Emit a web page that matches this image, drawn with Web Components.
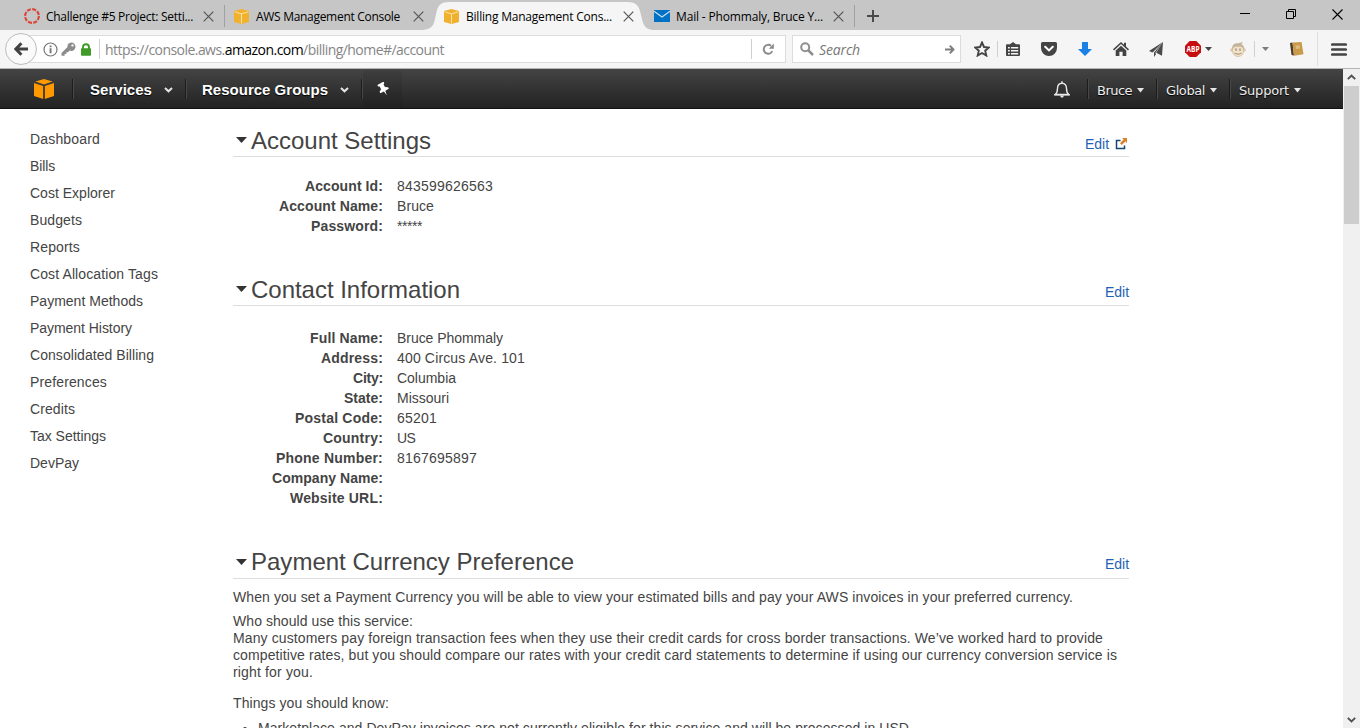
<!DOCTYPE html>
<html lang="en">
<head>
<meta charset="utf-8">
<title>Billing Management Console</title>
<style>
html,body{margin:0;height:100%;overflow:hidden;background:#fff}
body{font-family:"Liberation Sans",Arial,sans-serif;font-size:14px;color:#444}
</style>
</head>
<body>
<browser-window></browser-window>
<script>
const define = (name, html, init) => {
  const t = document.createElement('template');
  t.innerHTML = html;
  customElements.define(name, class extends HTMLElement {
    connectedCallback() {
      if (this.shadowRoot) return;
      this.attachShadow({mode: 'open'}).appendChild(t.content.cloneNode(true));
      if (init) init(this, this.shadowRoot);
    }
  });
};

/* Single-line text tracked to a given width. */
define('fit-text', `<style>:host{display:inline-block;white-space:nowrap;flex:none}</style><span><slot></slot></span>`, (el, root) => {
  const span = root.querySelector('span');
  const w = +el.getAttribute('w');
  if (!w) return;
  const n = el.textContent.length;
  span.style.letterSpacing = ((w - span.getBoundingClientRect().width) / n) + 'px';
  el.style.width = w + 'px';
});

const cube = (c, d) => `<path fill="${c}" d="M10 0 18.6 2.6 10 5.4 1.4 2.6zM0 3.9 9.3 6.9V20L0 17zM20 3.9 10.7 6.9V20L20 17z"/><path fill="${d}" d="M9.3 6.9h1.4V20H9.3z"/>`;
const icons = {
  canvas: [16,16,'<circle cx="8" cy="8" r="6.9" fill="none" stroke="#dd4238" stroke-width="2.1" stroke-dasharray="4.1 1.32"/>'],
  cubeTab: [15,15,'<svg viewBox="0 0 20 20" width="15" height="15"><path fill="#f0b22e" d="M10 0 20 2.6V17.4L10 20 0 17.4V2.6z"/><path d="M1 3.8 10 6.4 19 3.8M10 6.4V19" stroke="#fae3a8" stroke-width="1.3" fill="none"/></svg>'],
  cube: [20,20,cube('#f90','#4a3a20')],
  mail: [16,12,'<path fill="#0072c6" d="M0 0h16v12H0z"/><path d="M0 1.2 8 7l8-5.8" stroke="#c9dcec" stroke-width="1.4" fill="none"/>'],
  x: [11,11,'<path d="M.7.7l9.6 9.6M10.3.7.7 10.3" stroke="#555" stroke-width="1.2"/>'],
  plus: [12,12,'<path d="M6 0v12M0 6h12" stroke="#4a4a4a" stroke-width="2"/>'],
  min: [10,10,'<path d="M0 4.5h10" stroke="#000"/>'],
  restore: [10,10,'<path d="M.5 2.5h7v7h-7zM2.5 2.5v-2h7v7h-2" stroke="#000" fill="none"/>'],
  winx: [11,11,'<path d="M.5.5l10 10M10.500.5l-10 10" stroke="#000" stroke-width="1.1"/>'],
  back: [14,14,'<path d="M7.400 1.200 1.800 7l5.600 5.800M2.400 7H14" stroke="#424242" stroke-width="3" fill="none"/>'],
  info: [15,15,'<circle cx="7.500" cy="7.500" r="6.500" fill="none" stroke="#777" stroke-width="1.200"/><path d="M6.600 6.300h1.900v5H6.600zM6.600 3.500h1.900v1.700H6.600z" fill="#777"/>'],
  key: [15,15,'<path fill="#8c8c8c" fill-rule="evenodd" d="M10.200.5a4.200 4.200 0 1 1-1.500 8.100L7 10.300H5.400v1.700H3.600v1.700H.5v-2.600l6-6A4.200 4.200 0 0 1 10.200.5zM11.500 2.200a1.200 1.200 0 1 0 .01 0z"/>'],
  lock: [10,13,'<path d="M2 6V4.200a3 3 0 0 1 6 0V6" stroke="#3f9a28" stroke-width="1.900" fill="none"/><rect y="5.300" width="10" height="7.400" rx=".8" fill="#3f9a28"/>'],
  reload: [13,13,'<path d="M10.300 8.200A4.500 4.500 0 1 1 9 2.700" stroke="#8a8a8a" stroke-width="1.900" fill="none"/><path d="M6.800 5.800h5V.6z" fill="#8a8a8a"/>'],
  search: [14,14,'<circle cx="5.200" cy="5.200" r="4" stroke="#8f8f8f" stroke-width="2" fill="none"/><path d="M8 8l5 5" stroke="#8f8f8f" stroke-width="2.500"/>'],
  go: [10,9,'<path d="M0 4.500h8M4.800.7l3.700 3.800-3.700 3.800" stroke="#7d7d7d" stroke-width="1.900" fill="none"/>'],
  star: [16,16,'<path d="M8 1.500l2 4.500 4.900.5-3.700 3.200 1.100 4.800L8 12l-4.300 2.500 1.100-4.800L1.100 6.500 6 6z" fill="none" stroke="#444" stroke-width="1.900"/>'],
  list: [14,15,'<path fill="#444" fill-rule="evenodd" d="M4 2.200 7 0l3 2.200h3a1 1 0 0 1 1 1V13a1 1 0 0 1-1 1H1a1 1 0 0 1-1-1V3.200a1 1 0 0 1 1-1zM2 5v1.500h1.800V5zm3 0v1.500h7.200V5zM2 8v1.500h1.800V8zm3 0v1.500h7.200V8zM2 11v1.500h1.800V11zm3 0v1.500h7.200V11z"/>'],
  pocket: [16,14,'<path fill="#444" d="M1.500 0h13A1.500 1.500 0 0 1 16 1.500V6A8 8 0 0 1 0 6V1.500A1.500 1.500 0 0 1 1.500 0z"/><path d="M4.200 4.800 8 8.400l3.800-3.600" stroke="#fff" stroke-width="2.100" stroke-linecap="round" fill="none"/>'],
  down: [14,14,'<path fill="#1a80e6" d="M4 0h6v7h4l-7 7-7-7h4z"/>'],
  home: [16,14,'<path fill="#444" d="M8 0l3 2.700V.8h2v3.800L16 7.300l-1 1.100-7-6.300-7 6.300L0 7.300z"/><path fill="#444" d="M8 3.700l5.300 4.800V14H9.600V9.800H6.400V14H2.700V8.500z"/>'],
  plane: [14,15,'<path fill="#4a4a4a" d="M14 0 0 9l3.500 1.400zM14 0 5 10.500V15l2-2.700-.6-1.300zM14 0 7.200 10.800l5.800 3z"/>'],
  abp: [16,16,'<path fill="#c70d0d" d="M4.700 0h6.600L16 4.700v6.600L11.300 16H4.700L0 11.300V4.700z"/><text x="8" y="10.900" text-anchor="middle" textLength="13" lengthAdjust="spacingAndGlyphs" font-family="Open Sans,sans-serif" font-weight="700" font-size="8" fill="#fff">ABP</text>'],
  caret: [7,4,'<path fill="#444" d="M0 0h7L3.500 4z"/>'],
  caretg: [7,4,'<path fill="#7c7c7c" d="M0 0h7L3.500 4z"/>'],
  monkey: [16,15,'<circle cx="1.800" cy="8" r="1.700" fill="#dccab2"/><circle cx="14.200" cy="8" r="1.700" fill="#dccab2"/><path fill="#c4b49c" d="M2 7C2 2 5 1 8 1.300l5-1.300-1.500 2.300C14 3.500 14.500 6 14 8z"/><path fill="#f3e3cb" stroke="#d3bd9d" stroke-width=".8" d="M2.500 9c0-4 2.500-5 5.500-4.500C11.500 4 13.500 5 13.500 9c0 7.300-11 7.300-11 0z"/><path stroke="#8f8270" stroke-width="1.300" d="M6 6.500v2.300M10 6.500v2.300" fill="none"/><path stroke="#a08e78" d="M4.500 11c2.300 1.500 4.700 1.500 7 0" fill="none"/>'],
  book: [14,14,'<path fill="#4d3c2a" d="M0 1 2.500.5 4 13.500 1.500 13z"/><path fill="#c99a4a" d="M2.500.5 11.500 0 13.500 12.200 4 13.800z"/><path fill="#e5c68c" d="M5.500 3.500 9.500 3.200 10 6.500 6 7z" opacity=".8"/>'],
  burger: [16,13,'<path d="M1.300 1.500h13.400M1.300 6.500h13.400M1.300 11.500h13.400" stroke="#444" stroke-width="2.700" stroke-linecap="round"/>'],
  chev: [9,6,'<path d="M1 1l3.500 3.300L8 1" stroke="#e6e6e6" stroke-width="2" fill="none"/>'],
  caretw: [7,5,'<path fill="#e6e6e6" d="M0 0h7L3.500 4.500z"/>'],
  pin: [13,14,'<g transform="rotate(-28 6.500 7)"><path fill="#fff" d="M3 .5h7v1.700L8.700 3v3l2.600 1.700v1.600H7.300L6.500 14l-.8-4.700h-4V7.700L4.300 6V3L3 2.200z"/></g>'],
  bell: [16,17,'<path d="M1.200 13.500C3.200 12 3.500 10 3.500 7.500 3.500 4 5.500 2.200 8 2.200s4.500 1.800 4.500 5.300c0 2.500.3 4.500 2.300 6z" stroke="#e8e8e8" stroke-width="1.400" fill="none"/><path d="M.3 13.700h15.400M8 .2v2" stroke="#e8e8e8" stroke-width="1.500"/><path d="M6 14.500h4l-1 2H7z" fill="#e8e8e8"/>'],
  ext: [12,12,'<path d="M5.500 2.500H1.500v8h8V7.500" stroke="#15466f" stroke-width="1.500" fill="none"/><path d="M7 0h5v5l-1.600-1.600L6.700 7 5 5.300l3.600-3.700z" fill="#d9822b"/>'],
  tri: [11,6,'<path d="M0 0h11L5.500 6z" fill="#333"/>'],
  up: [9,6,'<path d="M.8 5.200 4.500 1.500l3.700 3.700" stroke="#505050" stroke-width="1.900" fill="none"/>'],
  dn: [9,6,'<path d="M.8.8l3.700 3.700L8.200.8" stroke="#505050" stroke-width="1.900" fill="none"/>']
};
define('ui-icon', `<style>:host{display:block;flex:none;line-height:0}svg{display:block}</style>`, (el, root) => {
  const [w, h, body] = icons[el.getAttribute('name')];
  const box = document.createElement('div');
  box.innerHTML = `<svg xmlns="http://www.w3.org/2000/svg" width="${w}" height="${h}" viewBox="0 0 ${w} ${h}">${body}</svg>`;
  root.appendChild(box);
});

define('browser-tab', `<style>
:host{display:flex;align-items:center;width:210px;height:30px;box-sizing:border-box;padding:2px 10px 0;position:relative;flex:none;font:12px "Open Sans","Noto Sans",sans-serif;color:#000}
.i{width:22px}.x{margin-left:auto}
::slotted(*),.i,.x{position:relative}
.bg{display:none;position:absolute;left:-12px;top:2px}
:host([active]) .bg{display:block}
.d{display:none;position:absolute;right:-1px;top:5px;width:1px;height:22px;background:#a0a0a0}
:host([divided]) .d{display:block}
</style><svg class="bg" width="232" height="28"><path fill="#f5f5f5" d="M0 28C12 27 12 22 14 12 16 3 18 0 28 0H205C215 0 217 4 219 13 221 22 222 27 231 28z"/></svg>
<div class="i"><slot name="icon"></slot></div><slot></slot><ui-icon class="x" name="x"></ui-icon><div class="d"></div>`);

define('tab-strip', `<style>
:host{display:flex;height:30px;background:#c6c6c6;padding-left:14px;box-sizing:border-box}
.plus{margin:10px 0 0 13px}
.win{margin-left:auto;display:flex;gap:36px;padding:9px 17px 0 0}
</style>
<browser-tab divided><ui-icon slot="icon" name="canvas"></ui-icon><fit-text w="147">Challenge #5 Project: Setti...</fit-text></browser-tab>
<browser-tab><ui-icon slot="icon" name="cubeTab"></ui-icon><fit-text w="144">AWS Management Console</fit-text></browser-tab>
<browser-tab active><ui-icon slot="icon" name="cubeTab"></ui-icon><fit-text w="146">Billing Management Cons...</fit-text></browser-tab>
<browser-tab divided><ui-icon slot="icon" name="mail"></ui-icon><fit-text w="147">Mail - Phommaly, Bruce Y...</fit-text></browser-tab>
<ui-icon class="plus" name="plus"></ui-icon>
<div class="win"><ui-icon name="min"></ui-icon><ui-icon name="restore"></ui-icon><ui-icon name="winx"></ui-icon></div>`);

define('tool-bar', `<style>
:host{display:flex;align-items:center;height:39px;background:#f5f5f5;border-bottom:1px solid #b4b4b4;box-sizing:border-box;font:14px "Open Sans","Noto Sans",sans-serif;color:#858585}
.back{width:32px;height:32px;box-sizing:border-box;border:1px solid #bdbdbd;border-radius:50%;background:#fafafa;margin-left:5px;display:flex;align-items:center;justify-content:center;flex:none;z-index:1}
.field{display:flex;align-items:center;height:28px;box-sizing:border-box;border:1px solid #dcdcdc;background:#fff;flex:none}
.url{width:762px;margin-left:-13px;padding-left:18px}
.find{width:169px;margin-left:6px;padding-left:7px;font-style:italic;color:#777}
.s{width:1px;height:20px;background:#cfcfcf;flex:none}
b{font-weight:400;color:#000}
</style>
<div class="back"><ui-icon name="back"></ui-icon></div>
<div class="field url"><ui-icon name="info"></ui-icon><ui-icon name="key" style="margin-left:3px"></ui-icon><ui-icon name="lock" style="margin-left:5px"></ui-icon><div class="s" style="margin:0 5px 0 8px"></div><fit-text w="339">https://console.aws.<b>amazon.com</b>/billing/home#/account</fit-text><div class="s" style="margin-left:307px"></div><ui-icon name="reload" style="margin-left:10px"></ui-icon></div>
<div class="field find"><ui-icon name="search"></ui-icon><fit-text w="41" style="margin-left:5px">Search</fit-text><ui-icon name="go" style="margin-left:85px"></ui-icon></div>
<ui-icon name="star" style="margin-left:13px"></ui-icon><div class="s" style="margin-left:7px;height:16px"></div>
<ui-icon name="list" style="margin-left:8px"></ui-icon><ui-icon name="pocket" style="margin-left:21px"></ui-icon>
<ui-icon name="down" style="margin-left:21px"></ui-icon><ui-icon name="home" style="margin-left:21px"></ui-icon>
<ui-icon name="plane" style="margin-left:20px"></ui-icon><ui-icon name="abp" style="margin-left:22px"></ui-icon>
<ui-icon name="caret" style="margin-left:4px"></ui-icon><ui-icon name="monkey" style="margin-left:18px"></ui-icon>
<div class="s" style="margin-left:8px;height:16px"></div><ui-icon name="caretg" style="margin-left:7px"></ui-icon>
<ui-icon name="book" style="margin-left:21px"></ui-icon><div class="s" style="margin-left:13px;height:34px;background:#dedede"></div><ui-icon name="burger" style="margin-left:13px"></ui-icon>`);

define('console-nav', `<style>
:host{display:flex;align-items:center;height:40px;background:linear-gradient(#444,#222);border-bottom:1px solid #111;box-sizing:border-box;padding:1px 42px 0 34px;color:#fff;text-shadow:0 1px 1px #000}
.s{width:1px;height:20px;background:#1c1c1c;border-right:1px solid #484848;flex:none}
.m{font-weight:700;font-size:15px}
.r{font:13px "DejaVu Sans",Verdana,sans-serif;color:#eee;padding-top:2px}
.p{display:flex;align-items:center;width:39px;height:36px;padding-left:14px;box-sizing:border-box;background:#0001}
</style>
<ui-icon name="cube"></ui-icon><div class="s" style="margin:0 16px 0 18px"></div>
<fit-text class="m" w="62">Services</fit-text><ui-icon name="chev" style="margin:1px 0 0 12px"></ui-icon><div class="s" style="margin:0 15px 0 12px"></div>
<fit-text class="m" w="126">Resource Groups</fit-text><ui-icon name="chev" style="margin:1px 0 0 12px"></ui-icon><div class="s" style="margin-left:12px"></div>
<div class="p"><ui-icon name="pin"></ui-icon></div>
<ui-icon name="bell" style="margin-left:auto"></ui-icon><div class="s" style="margin:0 8px 0 17px"></div>
<fit-text class="r" w="35">Bruce</fit-text><ui-icon name="caretw" style="margin:2px 0 0 5px"></ui-icon><div class="s" style="margin:0 8px 0 12px"></div>
<fit-text class="r" w="39">Global</fit-text><ui-icon name="caretw" style="margin:2px 0 0 5px"></ui-icon><div class="s" style="margin:0 8px 0 12px"></div>
<fit-text class="r" w="50">Support</fit-text><ui-icon name="caretw" style="margin:2px 0 0 5px"></ui-icon>`);

define('side-nav', `<style>
:host{display:block;width:233px;box-sizing:border-box;padding:17px 0 0 30px;flex:none;line-height:27px}
::slotted(*){display:block!important}
</style><slot></slot>`);

define('panel-heading', `<style>
:host{display:flex;align-items:center;height:32px;box-sizing:border-box;border-bottom:1px solid #ddd;padding-left:3px;font-size:24px}
:host([raised]) .t{padding-bottom:2px}
.t{margin-left:4px;flex:1}
.e{display:flex;align-items:center;gap:6px;font-size:14px;color:#1f62b4;padding-top:6px}
ui-icon[name=tri]{margin-bottom:1px}
:host([raised]) .e{padding-top:3px}
:host([low]) .e{padding-top:4px}
</style><ui-icon name="tri"></ui-icon><div class="t"><slot></slot></div><div class="e"><fit-text w="24">Edit</fit-text><slot name="after"></slot></div>`);

define('detail-row', `<style>
:host{display:grid;grid-template-columns:150px 1fr;column-gap:14px;height:20px;line-height:20px}
.l{text-align:right;font-weight:700}
</style><div class="l"><slot name="label"></slot></div><div><slot></slot></div>`);

define('scroll-bar', `<style>
:host{display:flex;flex-direction:column;align-items:center;width:17px;background:#f0f0f0;flex:none}
.th{width:15px;height:138px;background:#cdcdcd;margin-top:6px}
ui-icon[name=up]{margin-top:5px}ui-icon[name=dn]{margin:auto 0 5px}
</style><ui-icon name="up"></ui-icon><div class="th"></div><ui-icon name="dn"></ui-icon>`);

const row = (l, lw, v, vw) => `<detail-row><fit-text slot="label" w="${lw}">${l}</fit-text>${v ? `<fit-text w="${vw}">${v}</fit-text>` : ''}</detail-row>`;
define('account-page', `<style>
:host{display:block;width:896px;padding-top:16px}
.rows{padding-top:19px}
.a{height:98px}.b{height:219px;padding-top:22px}
.txt{line-height:17px;padding-top:10px}
.txt fit-text{display:block}
ul{margin:8px 0 0;padding:0 0 0 25px}
</style>
<panel-heading><fit-text w="180">Account Settings</fit-text><ui-icon slot="after" name="ext" style="margin-right:2px"></ui-icon></panel-heading>
<div class="rows a">${row('Account Id:',78,'843599626563',96)}${row('Account Name:',104,'Bruce',37)}${row('Password:',72,'*****',25)}</div>
<panel-heading low><fit-text w="209">Contact Information</fit-text></panel-heading>
<div class="rows b">${row('Full Name:',73,'Bruce Phommaly',106)}${row('Address:',62,'400 Circus Ave. 101',128)}${row('City:',30,'Columbia',59)}${row('State:',39,'Missouri',52)}${row('Postal Code:',88,'65201',40)}${row('Country:',60,'US',18)}${row('Phone Number:',107,'8167695897',80)}${row('Company Name:',111)}${row('Website URL:',93)}</div>
<panel-heading raised><fit-text w="323">Payment Currency Preference</fit-text></panel-heading>
<div class="txt">
<fit-text w="840">When you set a Payment Currency you will be able to view your estimated bills and pay your AWS invoices in your preferred currency.</fit-text>
<fit-text w="180" style="margin-top:7px">Who should use this service:</fit-text>
<fit-text w="870">Many customers pay foreign transaction fees when they use their credit cards for cross border transactions. We’ve worked hard to provide</fit-text>
<fit-text w="884">competitive rates, but you should compare our rates with your credit card statements to determine if using our currency conversion service is</fit-text>
<fit-text w="80">right for you.</fit-text>
<fit-text w="156" style="margin-top:14px">Things you should know:</fit-text>
<ul><li><fit-text w="655">Marketplace and DevPay invoices are not currently eligible for this service and will be processed in USD.</fit-text></li></ul>
</div>`);

define('browser-window', `<style>
:host{display:flex;flex-direction:column;height:728px;overflow:hidden}
.view{display:flex;flex:1;min-height:0}
.doc{flex:1;min-width:0;overflow:hidden}
.cols{display:flex}
</style>
<tab-strip></tab-strip><tool-bar></tool-bar>
<div class="view"><div class="doc"><console-nav></console-nav><div class="cols">
<side-nav><fit-text w="70">Dashboard</fit-text><fit-text w="25">Bills</fit-text><fit-text w="85">Cost Explorer</fit-text><fit-text w="52">Budgets</fit-text><fit-text w="50">Reports</fit-text><fit-text w="128">Cost Allocation Tags</fit-text><fit-text w="113">Payment Methods</fit-text><fit-text w="102">Payment History</fit-text><fit-text w="124">Consolidated Billing</fit-text><fit-text w="77">Preferences</fit-text><fit-text w="45">Credits</fit-text><fit-text w="76">Tax Settings</fit-text><fit-text w="49">DevPay</fit-text></side-nav>
<account-page></account-page></div></div><scroll-bar></scroll-bar></div>`);
</script>
</body>
</html>
